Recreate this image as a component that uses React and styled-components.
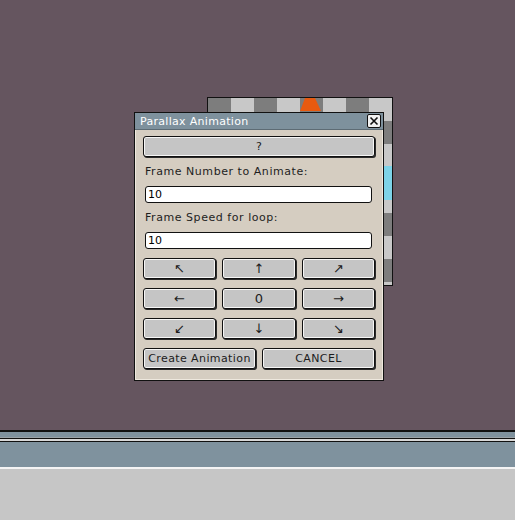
import React from 'react'
import styled, { createGlobalStyle } from 'styled-components'

const GlobalStyle = createGlobalStyle`
  html, body {
    margin: 0;
    padding: 0;
    background: #65555f;
  }
  * { box-sizing: border-box; }
`

const Screen = styled.div`
  width: 515px;
  height: 520px;
  display: flex;
  flex-direction: column;
  overflow: hidden;
  font-family: 'DejaVu Sans', 'Liberation Sans', sans-serif;
`

const Desktop = styled.div`
  position: relative;
  height: 430px;
  flex: none;
  background: #65555f;
`

const CanvasWindow = styled.div`
  position: absolute;
  left: 207px;
  top: 97px;
  width: 186px;
  height: 189px;
  border: 1px solid #111;
  background: #c8c8c8;
  overflow: hidden;
`

const Dialog = styled.div`
  position: absolute;
  left: 134px;
  top: 112px;
  width: 250px;
  height: 269px;
  border: 1px solid #111;
  background: #d5cdc1;
  box-shadow: inset 1px 1px 0 #eee8de, inset -1px -1px 0 #eee8de;
  display: flex;
  flex-direction: column;
`

const TitleBar = styled.div`
  height: 17px;
  background: #7e919d;
  display: flex;
  align-items: center;
  justify-content: space-between;
  padding: 0 2px 0 5px;
  border-bottom: 1px solid #5d6b74;
`

const Title = styled.span`
  color: #fff;
  font-size: 11px;
  letter-spacing: 0.3px;
`

const CloseBox = styled.div`
  width: 14px;
  height: 14px;
  border: 1px solid #111;
  border-radius: 2px;
  background: #f2f2f2;
  display: flex;
  align-items: center;
  justify-content: center;
`

const Body = styled.div`
  padding: 6px 8px 0 8px;
  display: flex;
  flex-direction: column;
`

const Button = styled.button`
  height: 21px;
  width: 100%;
  padding: 0;
  border: 1px solid #111;
  border-radius: 3px;
  background: #c5c5c5;
  box-shadow: inset 0 0 0 1px #f6f6f6, 1px 1px 0 #2a2a2a;
  font-family: inherit;
  font-size: ${p => (p.$glyph ? '13px' : '11px')};
  letter-spacing: ${p => (p.$glyph ? '0' : '0.4px')};
  color: #1c1c1c;
  display: flex;
  align-items: center;
  justify-content: center;
`

const Label = styled.div`
  font-size: 11px;
  letter-spacing: 0.55px;
  color: #1e1e1e;
  padding-left: 2px;
  height: 14px;
  line-height: 14px;
  margin-top: ${p => p.$top}px;
`

const Field = styled.input`
  margin: ${p => p.$top}px 3px 0 2px;
  height: 17px;
  border: 1px solid #111;
  border-radius: 3px;
  background: #fff;
  font-family: inherit;
  font-size: 11px;
  color: #000;
  padding: 0 2px;
  outline: none;
`

const Grid = styled.div`
  display: grid;
  grid-template-columns: ${p => p.$cols};
  column-gap: 6px;
  row-gap: 9px;
  margin-top: ${p => p.$top}px;
`

const Strip = styled.div`
  height: ${p => p.$h}px;
  background: ${p => p.$c};
  flex: none;
`

const Floor = styled.div`
  flex: 1;
  background: #c6c6c6;
`

function CanvasArt() {
  const size = 23
  const cells = []
  for (let r = 0; r < 9; r++) {
    for (let c = 0; c < 9; c++) {
      if ((r + c) % 2 === 0) {
        cells.push(<rect key={`${r}-${c}`} x={c * size} y={r * size} width={size} height={size} fill="#7d7d7d" />)
      }
    }
  }
  return (
    <svg width="186" height="189" viewBox="0 0 186 189">
      <rect width="186" height="189" fill="#c8c8c8" />
      {cells}
      <path d="M92 13 L97 0 L107 0 L113 13 Z" fill="#e85a10" />
      <rect x="170" y="68" width="16" height="34" fill="#7dd3e8" />
    </svg>
  )
}

const arrows = ['↖', '↑', '↗', '←', '0', '→', '↙', '↓', '↘']

export default function App() {
  return (
    <>
      <GlobalStyle />
      <Screen>
        <Desktop>
          <CanvasWindow>
            <CanvasArt />
          </CanvasWindow>
          <Dialog>
            <TitleBar>
              <Title>Parallax Animation</Title>
              <CloseBox>
                <svg width="10" height="10" viewBox="0 0 10 10">
                  <path d="M1.5 1.5 L8.5 8.5 M8.5 1.5 L1.5 8.5" stroke="#111" strokeWidth="1.6" />
                </svg>
              </CloseBox>
            </TitleBar>
            <Body>
              <Button>?</Button>
              <Label $top={8}>Frame Number to Animate:</Label>
              <Field $top={7} defaultValue="10" />
              <Label $top={8}>Frame Speed for loop:</Label>
              <Field $top={7} defaultValue="10" />
              <Grid $cols="73px 74px 1fr" $top={9}>
                {arrows.map(a => (
                  <Button key={a} $glyph>{a}</Button>
                ))}
              </Grid>
              <Grid $cols="113px 1fr" $top={9}>
                <Button>Create Animation</Button>
                <Button>CANCEL</Button>
              </Grid>
            </Body>
          </Dialog>
        </Desktop>
        <Strip $h={2} $c="#111" />
        <Strip $h={5} $c="#7f929e" />
        <Strip $h={1} $c="#9aa3a8" />
        <Strip $h={1} $c="#111" />
        <Strip $h={2} $c="#d8d8d8" />
        <Strip $h={1} $c="#111" />
        <Strip $h={25} $c="#7f929e" />
        <Strip $h={2} $c="#f4f4f4" />
        <Floor />
      </Screen>
    </>
  )
}
